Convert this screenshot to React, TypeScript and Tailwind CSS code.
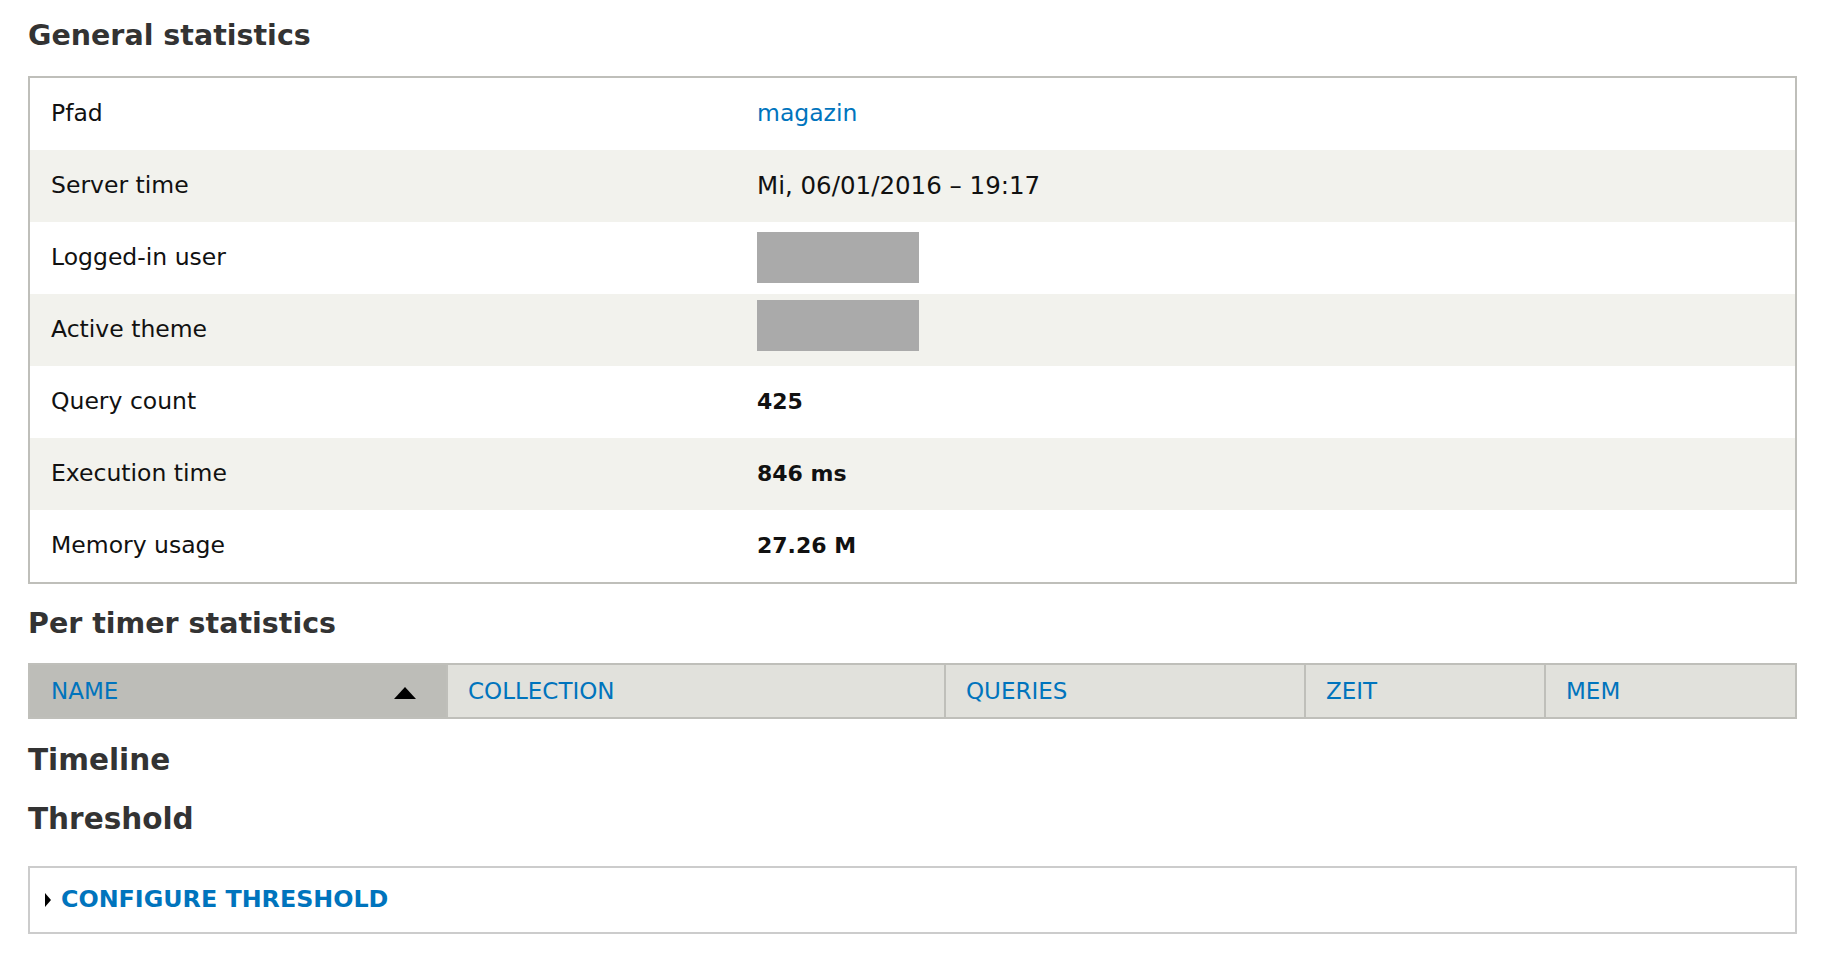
const general: { label: string; value: string; kind: 'link' | 'text' | 'bold' | 'redacted'; offset?: string }[] = [
  { label: 'Pfad', value: 'magazin', kind: 'link' },
  { label: 'Server time', value: 'Mi, 06/01/2016 – 19:17', kind: 'text' },
  { label: 'Logged-in user', value: '', kind: 'redacted', offset: 'mt-[10px]' },
  { label: 'Active theme', value: '', kind: 'redacted', offset: 'mt-[6px]' },
  { label: 'Query count', value: '425', kind: 'bold' },
  { label: 'Execution time', value: '846 ms', kind: 'bold' },
  { label: 'Memory usage', value: '27.26 M', kind: 'bold' },
];

const columns = [
  { name: 'Collection', width: 'w-[498px]' },
  { name: 'Queries', width: 'w-[360px]' },
  { name: 'Zeit', width: 'w-[240px]' },
  { name: 'Mem', width: 'flex-1' },
];

function Value({ row }: { row: (typeof general)[number] }) {
  if (row.kind === 'link') return <a className="text-[#0074bd] cursor-pointer">{row.value}</a>;
  if (row.kind === 'bold') return <span className="text-[22px] font-bold text-[#111]">{row.value}</span>;
  if (row.kind === 'redacted') return <div className={`h-[51px] w-[162px] bg-[#aaaaaa] ${row.offset}`} />;
  return <span className="text-[24.5px] text-[#111]">{row.value}</span>;
}

export default function App() {
  return (
    <div className="min-h-screen bg-white pl-[28px] pr-[41px] font-['DejaVu_Sans',sans-serif] text-[#222]">
      {/* General statistics */}
      <h2 className="pt-[22px] text-[28.5px] leading-[28px] font-bold text-[#333]">General statistics</h2>
      <div className="mt-[26px] border-2 border-[#bfbfba]">
        {general.map((row, i) => (
          <div
            key={row.label}
            className={`flex h-[72px] text-[23.5px] leading-none ${i % 2 === 1 ? 'bg-[#f2f2ed]' : 'bg-white'}`}
          >
            <div className="flex w-[40%] items-center pl-[21px] text-[#111]">{row.label}</div>
            <div className={`flex flex-1 pl-[21px] ${row.kind === 'redacted' ? 'items-start' : 'items-center'}`}>
              <Value row={row} />
            </div>
          </div>
        ))}
      </div>

      {/* Per timer statistics */}
      <h2 className="mt-[26px] text-[28.5px] leading-[28px] font-bold text-[#333]">Per timer statistics</h2>
      <div className="mt-[25px] flex h-[56px] border-2 border-[#bfbfba] text-[23px] leading-none uppercase">
        <div className="flex w-[416px] items-center justify-between bg-[#bdbdb8] pl-[21px] pr-[30px]">
          <a className="text-[#0074bd] cursor-pointer">Name</a>
          <svg width="22" height="12" viewBox="0 0 22 12" className="mt-[3px]">
            <polygon points="11,0 22,12 0,12" fill="#000" />
          </svg>
        </div>
        {columns.map((c) => (
          <div key={c.name} className={`flex items-center border-l-2 border-[#bfbfba] bg-[#e1e1dc] pl-[20px] ${c.width}`}>
            <a className="text-[#0074bd] cursor-pointer">{c.name}</a>
          </div>
        ))}
      </div>

      <h3 className="mt-[27px] text-[29.5px] leading-[29px] font-bold text-[#333]">Timeline</h3>
      <h3 className="mt-[30px] text-[29.5px] leading-[29px] font-bold text-[#333]">Threshold</h3>

      {/* Details */}
      <div className="mt-[32px] flex h-[68px] items-center border-2 border-[#cccccc] pl-[15px]">
        <svg width="6" height="14" viewBox="0 0 6 14">
          <polygon points="0,0 6,7 0,14" fill="#000" />
        </svg>
        <a className="ml-[10px] text-[23.8px] leading-none font-bold text-[#0074bd] uppercase cursor-pointer">
          Configure threshold
        </a>
      </div>
    </div>
  );
}
